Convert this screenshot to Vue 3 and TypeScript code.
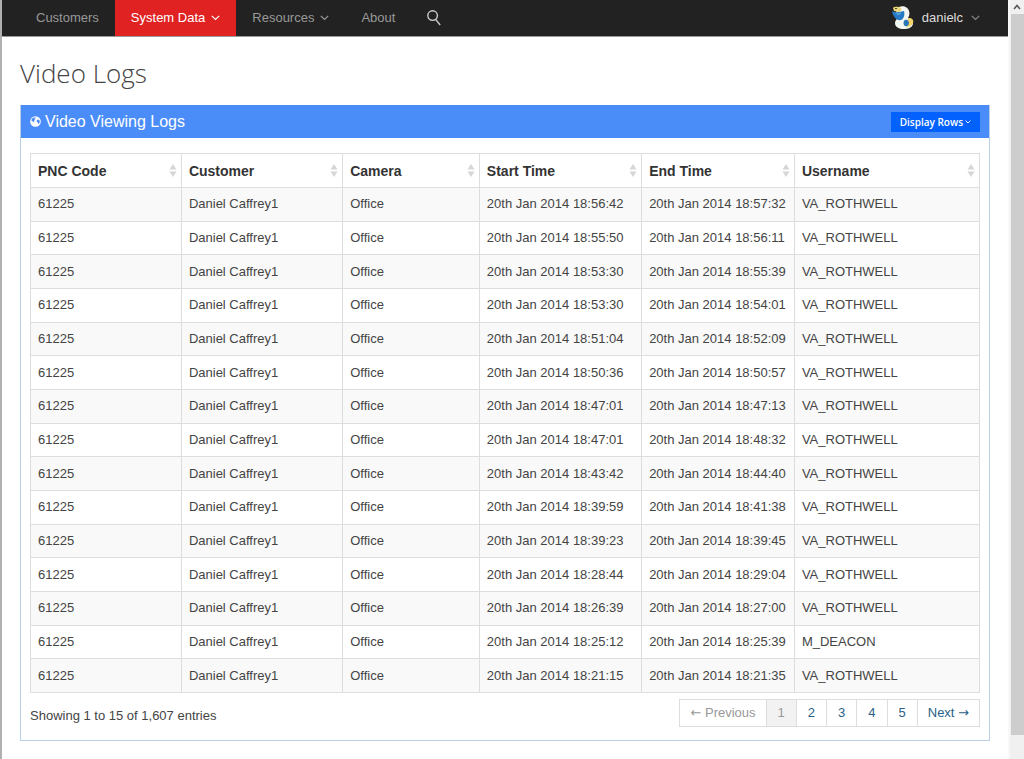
<script setup lang="ts">
interface LogEntry {
  start: string
  end: string
  user: string
}

const columns: string[] = ['PNC Code', 'Customer', 'Camera', 'Start Time', 'End Time', 'Username']

const times: [string, string][] = [
  ['18:56:42', '18:57:32'],
  ['18:55:50', '18:56:11'],
  ['18:53:30', '18:55:39'],
  ['18:53:30', '18:54:01'],
  ['18:51:04', '18:52:09'],
  ['18:50:36', '18:50:57'],
  ['18:47:01', '18:47:13'],
  ['18:47:01', '18:48:32'],
  ['18:43:42', '18:44:40'],
  ['18:39:59', '18:41:38'],
  ['18:39:23', '18:39:45'],
  ['18:28:44', '18:29:04'],
  ['18:26:39', '18:27:00'],
  ['18:25:12', '18:25:39'],
  ['18:21:15', '18:21:35'],
]

const logs: LogEntry[] = times.map(([start, end], i) => ({
  start: `20th Jan 2014 ${start}`,
  end: `20th Jan 2014 ${end}`,
  user: i === 13 ? 'M_DEACON' : 'VA_ROTHWELL',
}))

const pages: number[] = [2, 3, 4, 5]
</script>

<template>
  <div class="window">
    <div class="page">
      <header class="topbar">
        <nav class="nav">
          <a href="#">Customers</a>
          <a href="#" class="active">
            System Data
            <svg class="chevron" viewBox="0 0 9 6"><path d="M0.8 0.8 4.5 4.5 8.2 0.8" /></svg>
          </a>
          <a href="#">
            Resources
            <svg class="chevron" viewBox="0 0 9 6"><path d="M0.8 0.8 4.5 4.5 8.2 0.8" /></svg>
          </a>
          <a href="#">About</a>
          <button type="button" class="search" aria-label="Search">
            <svg viewBox="0 0 14 16">
              <circle cx="5.6" cy="5.6" r="4.8" />
              <path d="M8.6 9.4 13.2 15" />
            </svg>
          </button>
        </nav>
        <button type="button" class="user">
          <svg class="avatar" viewBox="0 0 22 24">
            <path fill="#f4f6f2" d="M7 1C11-1 16 1 17 5c1 3 0 5-1 7 3 1 5 3 5 6-1 4-5 5-9 5-5 0-9-2-9-6 0-2 1-3 2-4C3 9 4 3 7 1Z" />
            <path fill="#ead679" d="M1 2c2-2 6-1 8 0 1 2 0 3-2 4L2 5Z" />
            <path fill="#4b4a35" d="M3 2h2v1H3Z" />
            <path fill="#2679c4" d="M0 5c4 2 8 1 12 0 1 3 0 8-3 9-4 1-8-3-9-9Z" />
            <path fill="#56a8dd" d="M2 7c3 1 5 0 7-1 0 2-1 3-3 3Z" />
            <path fill="#f1d36c" d="M17 12c3 0 5 2 4 5-1 2-3 4-6 4-2-2-1-6 2-9Z" />
            <path fill="#2875b9" d="M13 14c2-1 4 1 4 3s-2 4-4 3-2-5 0-6Z" />
          </svg>
          danielc
          <svg class="chevron" viewBox="0 0 9 6"><path d="M0.8 0.8 4.5 4.5 8.2 0.8" /></svg>
        </button>
      </header>

      <main class="content">
        <h1>Video Logs</h1>
        <section class="panel">
          <div class="panel-head">
            <h2>
              <svg class="globe" viewBox="0 0 12 12">
                <circle cx="6" cy="6" r="5.8" fill="#fff" />
                <path fill="#4b8df8" d="M6.500 1.300 5.400 2.600 6 3.400 4.600 4.400 5 5.400 4.200 6.600 2.400 5.600 1.400 4.400 2.800 2.200Z" />
                <path fill="#4b8df8" d="M7.600 4.400 9.400 3.800 10.800 5.400 10.200 8 8.800 8.800 8.400 6.800 7.200 6Z" />
              </svg>
              Video Viewing Logs
            </h2>
            <button type="button" class="rows">
              Display Rows
              <svg viewBox="0 0 6 4"><path d="M0.600 0.600 3 3 5.400 0.600" /></svg>
            </button>
          </div>
          <div class="panel-body">
            <table>
              <colgroup>
                <col v-for="c in columns" :key="c" />
              </colgroup>
              <thead>
                <tr>
                  <th v-for="c in columns" :key="c" scope="col">
                    <span class="th">
                      {{ c }}
                      <svg class="sort" viewBox="0 0 8 13"><path d="M4 0 7.500 5.500h-7ZM4 13 .5 7.500h7Z" /></svg>
                    </span>
                  </th>
                </tr>
              </thead>
              <tbody>
                <tr v-for="(log, i) in logs" :key="i">
                  <td>61225</td>
                  <td>Daniel Caffrey1</td>
                  <td>Office</td>
                  <td>{{ log.start }}</td>
                  <td>{{ log.end }}</td>
                  <td>{{ log.user }}</td>
                </tr>
              </tbody>
            </table>
            <div class="foot">
              <p>Showing 1 to 15 of 1,607 entries</p>
              <nav class="pager" aria-label="Pagination">
                <a href="#" class="off"><span class="arrow">←</span> Previous</a>
                <a href="#" class="current">1</a>
                <a v-for="p in pages" :key="p" href="#">{{ p }}</a>
                <a href="#">Next <span class="arrow">→</span></a>
              </nav>
            </div>
          </div>
        </section>
      </main>
    </div>
    <div class="scrollbar" aria-hidden="true">
      <svg viewBox="0 0 8 6"><path d="M1 5 4 1.500 7 5" /></svg>
      <div class="thumb"></div>
    </div>
  </div>
</template>

<style>
body {
  margin: 0;
  background: #fff;
}
</style>

<style scoped>
.window {
  display: flex;
  min-height: 100vh;
  box-sizing: border-box;
  border-left: 2px solid #b0b0b0;
  font: 13px/18px "Liberation Sans", Arial, sans-serif;
  color: #444;
}
.page {
  flex: 1;
  min-width: 0;
}
button {
  border: 0;
  background: none;
  font: inherit;
  cursor: pointer;
}
a {
  text-decoration: none;
}
.topbar {
  display: flex;
  justify-content: space-between;
  height: 36px;
  padding: 0 28px 0 18px;
  background: #222;
  border-bottom: 1px solid #999;
}
.nav {
  display: flex;
}
.nav a {
  display: flex;
  align-items: center;
  gap: 6px;
  padding: 0 16px;
  color: #999;
}
.nav a.active {
  background: #e02222;
  color: #fff;
}
.chevron {
  width: 9px;
  height: 6px;
  fill: none;
  stroke: currentColor;
  stroke-width: 1.2;
}
.search {
  display: flex;
  align-items: center;
  padding: 0 16px;
}
.search svg {
  width: 14px;
  height: 16px;
  fill: none;
  stroke: #ccc;
  stroke-width: 1.4;
}
.user {
  display: flex;
  align-items: center;
  gap: 8px;
  padding: 0;
  color: #ddd;
}
.avatar {
  width: 22px;
  height: 24px;
}
.user .chevron {
  stroke: #888;
}
.content {
  padding: 18px 18px;
}
h1 {
  margin: 0 0 14px;
  font: 300 26px/36px "Open Sans", sans-serif;
  color: #444;
}
.panel {
  border: 1px solid #b9cfe6;
  border-top: 0;
}
.panel-head {
  display: flex;
  align-items: center;
  justify-content: space-between;
  height: 33px;
  padding: 0 9px;
  background: #4b8df8;
}
h2 {
  display: flex;
  align-items: center;
  gap: 4px;
  margin: 0;
  font-size: 16px;
  font-weight: 400;
  color: #fff;
}
.globe {
  width: 11px;
  height: 11px;
}
.rows {
  display: flex;
  align-items: center;
  gap: 2px;
  height: 20px;
  padding: 0 9px;
  background: #0362fd;
  color: #fff;
  font: 600 10px/20px "Open Sans", sans-serif;
}
.rows svg {
  width: 6px;
  height: 4px;
  fill: none;
  stroke: #fff;
}
.panel-body {
  padding: 15px 9px 13px;
}
table {
  width: 100%;
  height: 540px;
  table-layout: fixed;
  border-collapse: collapse;
}
col:nth-child(1) { width: 15.9%; }
col:nth-child(2) { width: 17%; }
col:nth-child(3) { width: 14.4%; }
col:nth-child(4) { width: 17.1%; }
col:nth-child(5) { width: 16.1%; }
th,
td {
  padding: 7px;
  border: 1px solid #ddd;
  text-align: left;
  white-space: nowrap;
}
th {
  height: 19px;
  padding-right: 4px;
  font-size: 14px;
  color: #333;
}
.th {
  display: flex;
  align-items: center;
  justify-content: space-between;
}
.sort {
  width: 8px;
  height: 13px;
  fill: #d6d6d6;
}
tbody tr:nth-child(odd) {
  background: #f9f9f9;
}
.foot {
  display: flex;
  justify-content: space-between;
  padding-top: 6px;
}
.foot p {
  margin: 8px 0 0;
}
.pager {
  display: flex;
  border: 1px solid #ddd;
}
.pager a {
  padding: 4px 11px;
  line-height: 18px;
  color: #2b5f87;
}
.pager a + a {
  border-left: 1px solid #ddd;
}
.pager a:last-child,
.pager .off {
  padding: 4px 10px;
}
.pager .off {
  color: #999;
}
.pager .current {
  background: #f2f2f2;
  color: #999;
}
.arrow {
  font-family: "DejaVu Sans", sans-serif;
  line-height: 1;
}
.scrollbar {
  display: flex;
  flex-direction: column;
  align-items: center;
  width: 14px;
  padding-bottom: 24px;
  border-left: 2px solid #f8f8f8;
  background: #f0f0f0;
}
.scrollbar svg {
  width: 8px;
  height: 6px;
  margin: 4px 0;
  fill: none;
  stroke: #555;
  stroke-width: 1.6;
}
.thumb {
  flex: 1;
  width: 13px;
  background: #cdcdcd;
}
</style>
